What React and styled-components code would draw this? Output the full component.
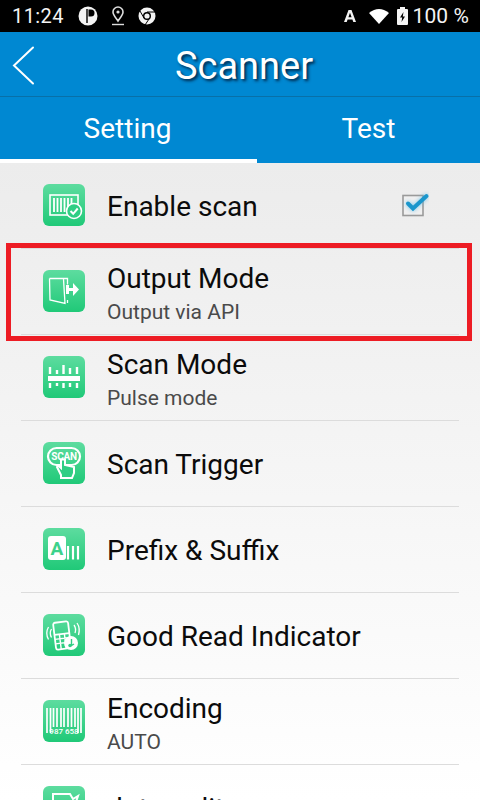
import React from 'react';
import styled, { createGlobalStyle } from 'styled-components';

const Global = createGlobalStyle`
  html, body { margin: 0; padding: 0; height: 800px; overflow: hidden; }
  body { font-family: Roboto, "Liberation Sans", sans-serif; }
`;
const Screen = styled.div`
  position: relative; width: 480px; height: 800px; overflow: hidden;
  display: flex; flex-direction: column;
  background: linear-gradient(180deg, #ececec 163px, #ffffff 800px);
`;
const StatusBar = styled.div`
  height: 32px; flex: none; background: #000; color: #f4f4f4;
  display: flex; align-items: center; padding: 0 11px 0 12px; font-size: 20px;
`;
const Time = styled.span`letter-spacing: 0.4px; margin-right: 14px; width: 52px;`;
const StatusIcons = styled.div`display: flex; align-items: center; gap: 13px; flex: 1;`;
const StatusRight = styled.div`display: flex; align-items: center; gap: 5px;`;
const Percent = styled.span`font-size: 21px; letter-spacing: 0.1px;`;
const LetterA = styled.svg`margin-right: 7px;`;
const Battery = styled.svg`margin-left: 3px;`;
const AppBar = styled.div`
  box-sizing: border-box; height: 65px; flex: none; background: #0088d2; border-bottom: 1px solid #0870a8;
  display: flex; align-items: center; justify-content: center; position: relative;
  padding: 3px 0 0 8px;
`;
const Back = styled.svg`position: absolute; left: 12px; top: 14px;`;
const Title = styled.h1`
  margin: 0; color: #fff; font-size: 38px; font-weight: 400;
  text-shadow: 2px 2px 3px rgba(0, 30, 60, 0.9);
`;
const Tabs = styled.div`height: 66px; flex: none; background: #0088d2; display: flex;`;
const Tab = styled.div`
  box-sizing: border-box; width: ${p => p.$w}px; display: flex; align-items: center; justify-content: center;
  color: #fff; font-size: 28px; padding: 1px ${p => (p.$active ? 2 : 0)}px 0 0;
  border-bottom: 4px solid ${p => (p.$active ? '#fff' : 'transparent')};
`;
const List = styled.div`display: flex; flex-direction: column; padding: 0 21px;`;
const Row = styled.div`
  box-sizing: border-box; height: 86px; flex: none; display: flex; align-items: center; gap: 22px;
  padding: 0 0 1px 22px; border-bottom: 1px solid #dcdcdc;
`;
const IconBox = styled.div`
  width: 42px; height: 42px; flex: none; border-radius: 6px;
  background: linear-gradient(180deg, #5ddc9f 0%, #20c978 100%);
  display: flex;
`;
const Texts = styled.div`
  display: flex; flex-direction: column; flex: 1;
  padding-top: ${p => (p.$sub ? 5 : 4)}px;
`;
const Name = styled.div`font-size: 28px; line-height: 34px; color: #0b0b0b; white-space: nowrap;`;
const Sub = styled.div`font-size: 21px; line-height: 26px; color: #4a4a4a; margin-top: 3px;`;
const Check = styled.svg`flex: none; margin-right: 30px; margin-top: -2px;`;
const CheckMark = styled.path`filter: drop-shadow(0 0 2px rgba(70, 180, 230, 0.7));`;
const Highlight = styled.div`
  position: absolute; left: 6px; top: 243px; width: 466px; height: 98px; box-sizing: border-box;
  border: 5px solid #ed1c24; pointer-events: none;
`;

const W = '#fff';
const G = '#30ce84';
const IconSvg = ({ children }) => (
  <svg width="42" height="42" viewBox="0 0 42 42">{children}</svg>
);
const icons = {
  enable: (
    <IconSvg>
      <rect x="7" y="11" width="28" height="20" fill="none" stroke={W} strokeWidth="1.6" />
      <path d="M11 14v14M14.500 14v14M18 14v14M21.500 14v14M25 14v10M28.500 14v6" stroke={W} strokeWidth="1.8" />
      <circle cx="31" cy="27" r="7.500" fill={G} stroke={W} strokeWidth="1.600" />
      <path d="M27.500 27l2.700 2.800 4.500-5.300" fill="none" stroke={W} strokeWidth="2" />
    </IconSvg>
  ),
  output: (
    <IconSvg>
      <path d="M6.500 8.500h18v6M24.500 30v3M6.500 8.500l.5 21.500 15 3.500-1.500-24.500" fill="none" stroke={W} strokeWidth="1.300" />
      <path d="M23 15h3v3h4v-5l6 6.500-6 6.500v-5h-4v3h-3z" fill={W} />
    </IconSvg>
  ),
  mode: (
    <IconSvg>
      <rect x="5" y="20" width="32" height="5" fill={W} />
      <path d="M7 11v7M14 14v4M20.500 9v9M27 12v6M34 11v7M7 27v5M14 27v3M20.500 27v5M27 27v4M34 27v5" stroke={W} strokeWidth="2.400" />
    </IconSvg>
  ),
  trigger: (
    <IconSvg>
      <rect x="5" y="6" width="32" height="17" rx="8.500" fill="none" stroke={W} strokeWidth="2.200" />
      <text x="21" y="18" textAnchor="middle" fontSize="10" fontWeight="700" letterSpacing="-0.300" fill={W} fontFamily="Roboto, sans-serif">SCAN</text>
      <path d="M18 17.500v8.500l-3-2.500-1 1.500 4 8v3h11l2-5v-6l-9-2v-5.500z" fill={G} stroke={W} strokeWidth="2" />
    </IconSvg>
  ),
  prefix: (
    <IconSvg>
      <rect x="5" y="8" width="18" height="24" rx="3" fill={W} />
      <text x="14" y="27" textAnchor="middle" fontSize="19" fontWeight="700" fill="#3dd28c" fontFamily="Roboto, sans-serif">A</text>
      <path d="M25 18v13.500M30 18v13.500M35 18v13.500" stroke={W} strokeWidth="2.200" />
    </IconSvg>
  ),
  good: (
    <IconSvg>
      <g transform="rotate(-7 19 21)">
        <rect x="11.500" y="8" width="15" height="27" rx="2" fill="none" stroke={W} strokeWidth="1.800" />
        <path d="M11.500 20h15" stroke={W} strokeWidth="1.800" />
        <path d="M11.500 24.500h15M11.500 29h15M16.500 20v15M21.500 20v15" stroke={W} strokeWidth="1.400" />
      </g>
      <circle cx="28" cy="29" r="7" fill={W} />
      <path d="M28.500 25v6.500l2.500-1.500" fill="none" stroke={G} strokeWidth="1.400" />
      <circle cx="27" cy="31.500" r="1.700" fill={G} />
      <path d="M8.500 15q-2.500 4 0 8.500M5.500 13q-3.500 6 0 12.500M31 11q2.500 3.500 1 8M34 9q3.500 5 1.500 12" fill="none" stroke={W} strokeWidth="1.300" />
    </IconSvg>
  ),
  encoding: (
    <IconSvg>
      <path d="M4 8v25M7.500 8v25M10.500 8v19M14 8v19M18 8v19M21 8v19M25 8v19M28.500 8v19M32 8v19M35 8v25M38 8v25" stroke={W} strokeWidth="1.700" />
      <text x="21" y="33.500" textAnchor="middle" fontSize="8" fontWeight="500" fill={W} fontFamily="Roboto, sans-serif">987 658</text>
    </IconSvg>
  ),
  quality: (
    <IconSvg>
      <path d="M10 8h17l3 5 5-3-2 6v12H10z" fill="none" stroke={W} strokeWidth="2" />
    </IconSvg>
  ),
};

const rows = [
  { icon: 'enable', name: 'Enable scan', check: true },
  { icon: 'output', name: 'Output Mode', sub: 'Output via API' },
  { icon: 'mode', name: 'Scan Mode', sub: 'Pulse mode' },
  { icon: 'trigger', name: 'Scan Trigger' },
  { icon: 'prefix', name: 'Prefix & Suffix' },
  { icon: 'good', name: 'Good Read Indicator' },
  { icon: 'encoding', name: 'Encoding', sub: 'AUTO' },
  { icon: 'quality', name: 'dot quality' },
];

export default function App() {
  return (
    <Screen>
      <Global />
      <StatusBar>
        <Time>11:24</Time>
        <StatusIcons>
          <svg width="20" height="20" viewBox="0 0 20 20">
            <circle cx="10" cy="10" r="9.500" fill="#f4f4f4" />
            <path d="M10.500 3.500h2.500a3.500 3.500 0 0 1 0 7h-2.500z" fill="#000" />
            <path d="M9 3v14" stroke="#000" strokeWidth="1.400" />
          </svg>
          <svg width="14" height="20" viewBox="0 0 14 20">
            <path d="M7 1a5 5 0 0 1 5 5c0 3-3 6-5 9-2-3-5-6-5-9a5 5 0 0 1 5-5z" fill="none" stroke="#ddd" strokeWidth="1.600" />
            <circle cx="7" cy="6" r="1.600" fill="#ddd" />
            <path d="M1 18.500h12" stroke="#ddd" strokeWidth="1.400" />
          </svg>
          <svg width="18" height="18" viewBox="0 0 18 18">
            <circle cx="9" cy="9" r="8.500" fill="#f4f4f4" />
            <circle cx="9" cy="9" r="4" fill="#000" />
            <circle cx="9" cy="9" r="2.600" fill="#f4f4f4" />
            <path d="M9 5h8M6 11L2 4M11 12l-4 6" stroke="#000" strokeWidth="1" />
          </svg>
        </StatusIcons>
        <StatusRight>
          <LetterA width="14" height="14" viewBox="0 0 14 14">
            <path d="M1 13L5.500 1h3L13 13h-2.700l-.9-2.600H4.600L3.700 13zM5.400 8.200h3.200L7 3.800z" fill="#f4f4f4" />
          </LetterA>
          <svg width="20" height="16" viewBox="0 0 20 16">
            <path d="M0 5Q10-3 20 5L10 16z" fill="#fff" />
          </svg>
          <Battery width="11" height="18" viewBox="0 0 11 18">
            <path d="M3 0h5v2h2a1 1 0 0 1 1 1v14a1 1 0 0 1-1 1H1a1 1 0 0 1-1-1V3a1 1 0 0 1 1-1h2z" fill="#f4f4f4" />
            <path d="M6.500 5L3 10.500h2.200L4.500 15 8 9.500H5.800z" fill="#000" />
          </Battery>
          <Percent>100 %</Percent>
        </StatusRight>
      </StatusBar>
      <AppBar>
        <Back width="24" height="40" viewBox="0 0 24 40">
          <path d="M21 1.500L2 19.500l19 18" fill="none" stroke="#fff" strokeWidth="2" strokeLinecap="round" />
        </Back>
        <Title>Scanner</Title>
      </AppBar>
      <Tabs>
        <Tab $w={257} $active>Setting</Tab>
        <Tab $w={223}>Test</Tab>
      </Tabs>
      <List>
        {rows.map(r => (
          <Row key={r.name}>
            <IconBox>{icons[r.icon]}</IconBox>
            <Texts $sub={!!r.sub}>
              <Name>{r.name}</Name>
              {r.sub && <Sub>{r.sub}</Sub>}
            </Texts>
            {r.check && (
              <Check width="30" height="28" viewBox="0 0 30 28">
                <rect x="4" y="5.500" width="20" height="20" fill="#f0f0f0" stroke="#9a9a9a" strokeWidth="1.600" />
                <CheckMark d="M9 13.500l5 5L27.500 6" fill="none" stroke="#1a96cc" strokeWidth="4" strokeLinecap="round" />
              </Check>
            )}
          </Row>
        ))}
      </List>
      <Highlight />
    </Screen>
  );
}
